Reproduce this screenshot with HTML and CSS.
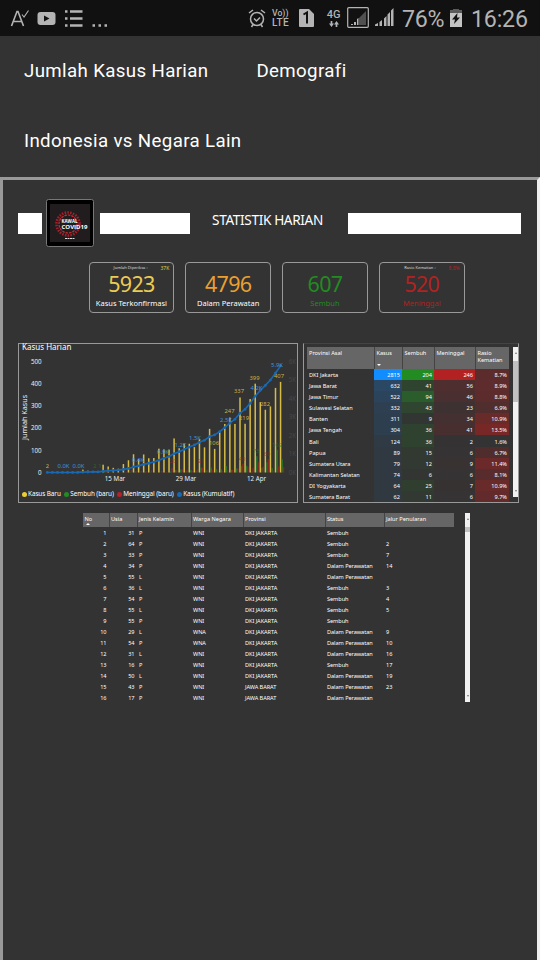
FILE: index.html
```html
<!DOCTYPE html>
<html lang="id">
<head>
<meta charset="utf-8">
<title>Statistik Harian</title>
<link rel="stylesheet" href="styles.css">
</head>
<body>
<header class="status">
  <svg class="status-left" width="120" height="36" viewBox="0 0 120 36" fill="none" stroke="#b4b4b4">
    <path d="M11.500 26L17 11.500H18L23.500 26M13.500 21.500H21.500" stroke-width="1.600"/>
    <path d="M22 14.500L24 17L28.500 10.500" stroke-width="1.100"/>
    <rect x="37.500" y="12" width="18" height="13" rx="3" fill="#b4b4b4" stroke="none"/>
    <path d="M44 15.500L49.500 18.500L44 21.500Z" fill="#111" stroke="none"/>
    <path d="M65 11.500H67.500M65 18.500H67.500M65 25.500H67.500M70 11.500H82.500M70 18.500H82.500M70 25.500H82.500" stroke-width="2.400"/>
    <path d="M92.500 25.500H95M98.500 25.500H101M104.500 25.500H107" stroke-width="2.500"/>
  </svg>
  <div class="status-right">
    <svg width="18" height="20" viewBox="0 0 18 20" fill="none" stroke="#b4b4b4" stroke-width="1.500">
      <circle cx="9" cy="11" r="6.500"/><path d="M6 10.500L8.500 13L12 9.500M1 5L5 2M17 5L13 2M5 16.500L3.500 19M13 16.500L14.500 19"/>
    </svg>
    <div class="volte"><span>Vo))</span><b>LTE</b></div>
    <svg class="sim" width="15" height="18" viewBox="0 0 15 18"><path d="M1 0H10L15 5V17Q15 18 14 18H1Q0 18 0 17V1Q0 0 1 0Z" fill="#b4b4b4"/><path d="M4.500 5.500L8 3.500V14.500" fill="none" stroke="#111" stroke-width="2"/></svg>
    <div class="net"><b>4G</b><svg width="10" height="6" viewBox="0 0 12 7" fill="#b4b4b4"><path d="M2 0H4V3H6L3 7L0 3H2ZM8 7H10V4H12L9 0L6 4H8Z"/></svg></div>
    <svg class="sig-box" width="22" height="22" viewBox="0 0 22 22"><rect x=".7" y=".7" width="20.600" height="19.600" rx="1" fill="none" stroke="#b4b4b4" stroke-width="1.200"/><path d="M12 18V11L19 4V18Z" fill="#505050"/><path d="M4 18V17H6V18ZM7 18V15H9V18ZM10 18V12L11.500 11V18Z" fill="#b4b4b4"/></svg>
    <svg class="sig" width="19" height="20" viewBox="0 0 19 20" fill="#b4b4b4"><path d="M0 18V16.500L3 15V18ZM4.500 18V14L7 12V18ZM9 18V10.500L11.500 8V18ZM12.500 18V6.500L15 4V18ZM16 18V2.500L18.500 0V18Z"/></svg>
    <span class="pct">76%</span>
    <svg class="bat" width="12" height="18" viewBox="0 0 12 18"><path d="M3.500 0H8.500V1.500H12V18H0V1.500H3.500Z" fill="#c4c4c4"/><path d="M3 0H9V1.500H12V4H0V1.500H3Z" fill="#5b5b5b"/><path d="M7.500 4L2 10.500H5L4 15L10 8.500H7Z" fill="#111"/></svg>
    <span class="time">16:26</span>
  </div>
</header>
<nav class="tabs">
  <a>Jumlah Kasus Harian</a><a>Demografi</a><a>Indonesia vs Negara Lain</a>
</nav>
<main class="report">
  <div class="title-row">
    <i class="stripe s1"></i>
    <svg class="logo" width="48" height="48" viewBox="0 0 48 48">
      <rect x=".5" y=".5" width="47" height="47" rx="2" fill="#000" stroke="#777"/>
      <rect x="4" y="5" width="40" height="38" fill="#211d1e"/>
      <circle cx="22" cy="25" r="11.500" fill="none" stroke="#a81f29" stroke-width="2.600" stroke-dasharray="1.500 1.300"/>
      <circle cx="22" cy="25" r="9" fill="none" stroke="#d02b36" stroke-width="1.200" stroke-dasharray="2.500 1"/>
      <text x="15.500" y="23.800" class="logo-text" textLength="16" lengthAdjust="spacingAndGlyphs">KAWAL</text>
      <text x="15.500" y="30" class="logo-text" textLength="26" lengthAdjust="spacingAndGlyphs">COVID19</text>
      <path d="M19 39.500H29" stroke="#ddd" stroke-width="1" stroke-dasharray="2 .5"/>
    </svg>
    <i class="stripe s2"></i>
    <h1>STATISTIK HARIAN</h1>
    <i class="stripe s3"></i>
  </div>
  <section class="cards">
    <div class="card yellow"><div class="note"><span>Jumlah Diperiksa :</span><em>37K</em></div><strong>5923</strong><p class="white">Kasus Terkonfirmasi</p></div>
    <div class="card orange"><div class="note"></div><strong>4796</strong><p class="white">Dalam Perawatan</p></div>
    <div class="card green"><div class="note"></div><strong>607</strong><p>Sembuh</p></div>
    <div class="card red"><div class="note"><span>Rasio Kematian :</span><em>8.8%</em></div><strong>520</strong><p>Meninggal</p></div>
  </section>
  <section class="panels">
    <div class="chart-panel">
      <svg id="chart" width="278" height="158" viewBox="0 0 278 158"></svg>
      <div class="legend"><span><i class="y"></i>Kasus Baru</span><span><i class="g"></i>Sembuh (baru)</span><span><i class="r"></i>Meninggal (baru)</span><span><i class="b"></i>Kasus (Kumulatif)</span></div>
    </div>
    <div class="prov-panel">
      <table class="prov"><colgroup><col><col><col><col><col></colgroup>
        <thead><tr><th>Provinsi Asal</th><th>Kasus<i class="down"></i></th><th>Sembuh</th><th>Meninggal</th><th>Rasio Kematian</th></tr></thead>
        <tbody id="prov"></tbody></table>
      <div class="scroll"><b class="up"></b><i></i><b class="down"></b></div>
    </div>
  </section>
  <section class="cases-wrap">
    <table class="cases"><colgroup><col><col><col><col><col><col><col></colgroup>
      <thead><tr><th>No<i class="up"></i></th><th>Usia</th><th>Jenis Kelamin</th><th>Warga Negara</th><th>Provinsi</th><th>Status</th><th>Jalur Penularan</th></tr></thead>
      <tbody id="cases"></tbody></table>
    <div class="scroll tall"><b class="up"></b><i></i><b class="down"></b></div>
  </section>
</main>
<script src="app.js"></script>
</body>
</html>
```
FILE: styles.css
```css
* { box-sizing: border-box; }
body { margin: 0; width: 540px; height: 960px; overflow: hidden; background: #333; color: #fff; font-family: "Noto Sans", sans-serif; }
.status { height: 36px; background: #111; display: flex; justify-content: space-between; font-family: Roboto, sans-serif; color: #b4b4b4; }
.status-right { display: flex; align-items: center; height: 36px; width: 292px; }
.status-right svg { flex: none; }
.volte { margin-left: 6px; width: 19px; font-size: 8.7px; line-height: 10px; font-weight: 500; }
.volte span, .volte b { display: block; white-space: nowrap; }
.volte b { font-size: 10px; font-weight: 500; letter-spacing: .4px; }
.sim { margin-left: 8px; }
.net { margin-left: 11px; width: 17px; display: flex; flex-direction: column; align-items: center; font-size: 11px; line-height: 11px; }
.net b { font-weight: 500; }
.net svg { margin-top: 1px; }
.sig-box { margin-left: 5px; }
.sig { margin-left: 6px; }
.pct, .time { font-size: 23.2px; line-height: 36px; padding-top: 2px; white-space: nowrap; }
.pct { margin-left: 8px; width: 42px; letter-spacing: -.3px; }
.bat { margin-left: 6px; }
.time { margin-left: 9px; letter-spacing: -.2px; }
.tabs { height: 141px; display: flex; flex-wrap: wrap; align-content: flex-start; column-gap: 48px; padding: 0 24px; font: 400 18.7px/70px Roboto, sans-serif; letter-spacing: .36px; }
.tabs a { white-space: nowrap; }
.report { height: 783px; border-top: 3px solid #999; border-left: 3px solid #999; border-right: 3px solid #eee; }
.title-row { display: flex; height: 82px; padding: 19px 0 0 15px; align-items: flex-start; }
.stripe { background: #fff; height: 21px; margin-top: 14px; }
.s1 { width: 24px; }
.s2 { width: 90px; margin-left: 6px; }
.s3 { width: 173px; }
.logo { margin-left: 4px; }
.logo-text { font: 700 5.5px "Open Sans", sans-serif; fill: #fff; }
h1 { margin: 10px 0 0; width: 158px; padding-right: 3px; text-align: center; font: 400 13.6px/22px "Noto Sans", sans-serif; white-space: nowrap; letter-spacing: -.35px; }
.cards { display: flex; gap: 11px; padding-left: 85.5px; height: 81px; }
.card { width: 85.8px; height: 51px; border: 1px solid #999; border-radius: 4px; text-align: center; }
.note { height: 9px; font-size: 4px; line-height: 10px; display: flex; justify-content: flex-end; gap: 12px; padding-right: 4px; color: #ddd; }
.note span { padding-right: 1px; }
.note em { font-style: normal; font-size: 5px; color: #e8c63f; }
.card strong { display: block; font-weight: 400; font-size: 21.5px; line-height: 24px; letter-spacing: -.7px; }
.card p { margin: 0; font-size: 7.5px; line-height: 14px; }
.card .white { color: #fff; }
.yellow { color: #ebcc52; }
.orange { color: #eb9f2f; }
.green { color: #228b22; }
.red, .red em { color: #b22222; }
.red .note em { color: #b22222; }
.panels { display: flex; gap: 5px; padding-left: 15px; height: 170px; }
.chart-panel { width: 280px; height: 160px; border: 1px solid #999; display: grid; }
.chart-panel svg, .legend { grid-area: 1 / 1; }
#chart { overflow: visible; }
.legend { align-self: end; display: flex; gap: 3.5px; font-size: 6.4px; letter-spacing: -.08px; line-height: 8px; padding: 0 0 4px 3px; white-space: nowrap; }
.legend span { display: flex; align-items: center; gap: 1px; }
.legend i { width: 5px; height: 5px; border-radius: 50%; }
.y { background: #ebcc35; } .g { background: #228b22; } .r { background: #b8202a; } .b { background: #1769b5; }
.prov-panel { width: 216px; height: 160px; border: 1px solid #999; border-top-color: #444; display: flex; padding: 3px 0 0 3px; overflow: hidden; }
table { border-collapse: collapse; table-layout: fixed; font-size: 5.6px; flex: none; }
th { background: #666; font-weight: 400; text-align: left; vertical-align: top; border-left: 1px solid #444; }
th:first-child { border-left: 0; }
td { padding: 0; white-space: nowrap; }
.prov { width: 202px; height: 155px; }
.prov col:nth-child(1) { width: 67px; } .prov col:nth-child(2) { width: 28px; } .prov col:nth-child(3) { width: 32px; } .prov col:nth-child(4) { width: 41px; } .prov col:nth-child(5) { width: 34px; }
.prov th { height: 22px; padding: 3px 2px 0; line-height: 7px; }
.prov td { height: 11px; line-height: 10px; padding-top: 1px; text-align: right; padding-right: 2px; }
.prov td:first-child { text-align: left; padding-left: 2px; }
th i { display: block; width: 0; border: 2px solid transparent; }
i.down { border-top-color: #fff; border-bottom: 0; margin-top: 7px; }
i.up { border-bottom-color: #fff; border-top: 0; margin-left: 1px; }
.scroll { width: 5px; height: 150px; margin-left: 4px; background: #f1f1f1; padding: 5px 0; display: flex; flex-direction: column; align-items: center; }
.scroll i { width: 5px; height: 41px; margin-top: 7px; background: #c1c1c1; }
.scroll b { border: 1.5px solid transparent; }
.scroll b.up { border-top: 0; border-bottom: 2px solid #777; }
.scroll b.down { margin-top: auto; border-bottom: 0; border-top: 2px solid #777; }
.cases-wrap { display: flex; padding-left: 80px; }
.cases { width: 371px; }
.cases col:nth-child(1) { width: 26px; } .cases col:nth-child(2) { width: 28px; } .cases col:nth-child(3) { width: 54px; } .cases col:nth-child(4) { width: 52px; } .cases col:nth-child(5) { width: 82px; } .cases col:nth-child(6) { width: 59px; } .cases col:nth-child(7) { width: 70px; }
.cases th { height: 14px; padding: 3px 1.5px 0; line-height: 7px; white-space: nowrap; }
.cases td { height: 11px; line-height: 10px; padding-top: 1px; padding-left: 2px; letter-spacing: -.06px; }
.cases td:nth-child(-n+2) { text-align: right; padding-right: 2.5px; }
.scroll.tall { height: 189px; margin-left: 11px; }
.tall i { height: 5px; }
.ax { font: 6.2px "Noto Sans", sans-serif; fill: #eee; }
.dl { font: 5.8px "Noto Sans", sans-serif; text-anchor: middle; }
```
FILE: app.js
```js
const daily = [2,0,0,0,2,0,2,13,8,7,0,35,27,21,17,38,55,82,60,81,64,65,107,104,103,153,109,130,129,114,149,113,196,106,181,218,247,218,337,219,330,399,316,282,297,380,407];
const deaths = [0,0,0,0,0,0,0,0,0,1,0,3,1,0,0,2,12,6,7,6,10,1,7,3,20,9,15,12,8,14,21,13,11,10,7,11,12,19,40,26,21,46,26,60,10,27,24];
const healed = [0,0,0,0,0,0,0,0,0,0,2,3,1,0,0,1,2,4,1,3,1,1,0,1,4,11,13,5,11,6,22,9,22,16,14,28,12,18,30,30,4,73,21,46,20,102,59];
const X = i => 28.3 + i * 5.07, base = 128.5, k = 0.2226, ck = 0.0180;
let s = '', sum = 0, pts = [];
const bar = (x, v, c, o) => v ? `<rect x="${x}" y="${base - v * k}" width="1.5" height="${v * k}" fill="${c}" opacity="${o}"/>` : '';
daily.forEach((v, i) => {
  s += bar(X(i) - .7, v, '#d6bc45', 1) + bar(X(i) + .9, healed[i], '#228b22', .7) + bar(X(i) + 2.2, deaths[i], '#b22222', .65);
  sum += v;
  pts.push([X(i), base - sum * ck]);
});
s += `<polyline points="${pts.join(' ')}" fill="none" stroke="#1769b5" stroke-width="1.6"/>`;
pts.forEach(p => s += `<circle cx="${p[0]}" cy="${p[1]}" r="1.4" fill="#1769b5"/>`);
const label = (x, y, t, c, o = 1) => s += `<text class="dl" x="${x}" y="${y}" fill="${c}" opacity="${o}">${t}</text>`;
[[28.5,124,'2'],[210.5,69,'247'],[220,49,'337'],[225,76,'219'],[235.500,36,'399'],[246,62,'282'],[260,34,'407'],[195,101,'106']].forEach(a => label(...a, '#c9b247'));
[[44.5,124,'0.0K'],[59.5,124,'0.0K'],[119,118,'0.4K'],[144,110,'0.9K'],[161.500,103,'1.2K'],[176,96,'1.5K'],[207,78,'2.5K'],[237.500,46,'4.2K'],[258,23,'5.9K']].forEach(a => label(...a, '#3f93df'));
[[76,124,'2'],[81,124,'1'],[237,109,'73'],[258,103,'102']].forEach(a => label(...a, '#287b28', .7));
[[154,119,'20'],[182,119,'21'],[223,117,'40'],[248,112,'60']].forEach(a => label(...a, '#9a2929', .7));
for (let n = 0; n <= 500; n += 100) s += `<text class="ax" x="22.500" y="${base + 2.300 - n * k}" text-anchor="end">${n}</text>`;
for (let n = 0; n <= 6; n++) s += `<text class="ax" x="277" y="${base + 2.200 - n * 18.5}" text-anchor="end" style="fill:#484848">${n}K</text>`;
s += `<text class="ax" x="96" y="137" text-anchor="middle">15 Mar</text><text class="ax" x="167" y="137" text-anchor="middle">29 Mar</text><text class="ax" x="237.500" y="137" text-anchor="middle">12 Apr</text>`;
s += `<text class="ax" style="font-size:7.2px" transform="translate(8 96) rotate(-90)">Jumlah Kasus</text><text class="ax" style="font-size:8px;fill:#fff" x="3" y="6.3">Kasus Harian</text>`;
document.getElementById('chart').innerHTML = s;

const prov = [['DKI Jakarta',2815,204,246,8.7],['Jawa Barat',632,41,56,8.9],['Jawa Timur',522,94,46,8.8],['Sulawesi Selatan',332,43,23,6.9],['Banten',311,9,34,10.9],['Jawa Tengah',304,36,41,13.5],['Bali',124,36,2,1.6],['Papua',89,15,6,6.7],['Sumatera Utara',79,12,9,11.4],['Kalimantan Selatan',74,6,6,8.1],['DI Yogyakarta',64,25,7,10.9],['Sumatera Barat',62,11,6,9.7]];
const mix = (c, t) => `rgba(${c},${Math.min(1, Math.max(0, t)).toFixed(2)})`;
document.getElementById('prov').innerHTML = prov.map(r => `<tr><td>${r[0]}</td>` +
  `<td style="background:${r[1] > 2000 ? '#118dff' : mix('30,100,170', .08 + r[1] / 1900)}">${r[1]}</td>` +
  `<td style="background:${mix('34,139,34', r[2] / 200)}">${r[2]}</td>` +
  `<td style="background:${r[3] > 200 ? '#b22222' : mix('178,34,34', r[3] / 250)}">${r[3]}</td>` +
  `<td style="background:${mix('150,34,34', (r[4] - 1.6) / 17)}">${r[4].toFixed(1)}%</td></tr>`).join('');

const S = 'Sembuh', D = 'Dalam Perawatan';
const cases = [[31,'P',S,''],[64,'P',S,2],[33,'P',S,7],[34,'P',D,14],[55,'L',D,''],[36,'L',S,3],[54,'P',S,4],[55,'L',S,5],[55,'P',S,''],[29,'L',D,9],[54,'P',D,10],[31,'L',D,16],[16,'P',S,17],[50,'L',D,19],[43,'P',D,23],[17,'P',D,'']];
document.getElementById('cases').innerHTML = cases.map((r, i) =>
  `<tr><td>${i + 1}</td><td>${r[0]}</td><td>${r[1]}</td><td>${i === 9 || i === 10 ? 'WNA' : 'WNI'}</td><td>${i > 13 ? 'JAWA BARAT' : 'DKI JAKARTA'}</td><td>${r[2]}</td><td>${r[3]}</td></tr>`).join('');
```
